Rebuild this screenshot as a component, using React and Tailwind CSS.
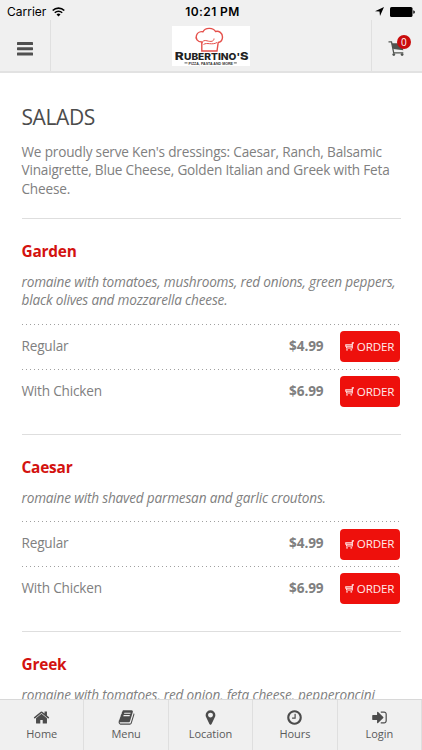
const GLYPHS = {
  home: "M1472 992v480q0 26-19 45t-45 19h-384v-384h-256v384h-384q-26 0-45-19t-19-45v-480q0-1 .5-3t.5-3l575-474 575 474q1 2 1 6zm223-69l-62 74q-8 9-21 11h-3q-13 0-21-7l-692-577-692 577q-12 8-24 7-13-2-21-11l-62-74q-8-10-7-23.5t11-21.5l719-599q32-26 76-26t76 26l244 204v-195q0-14 9-23t23-9h192q14 0 23 9t9 23v408l219 182q10 8 11 21.5t-7 23.5z",
  book: "M1703 478q40 57 18 129l-275 906q-19 64-76.5 107.5t-122.5 43.5h-923q-77 0-148.5-53.5t-99.5-131.5q-24-67-2-127 0-4 3-27t4-37q1-8-3-21.5t-3-19.5q2-11 8-21t16.5-23.5 16.5-23.5q23-38 45-91.5t30-91.5q3-10 .5-30t-.5-28q3-11 17-28t17-23q21-36 42-92t25-90q1-9-2.5-32t.5-28q4-13 22-30.5t22-22.5q19-26 42.5-84.5t27.5-96.5q1-8-3-25.5t-2-26.5q2-8 9-18t18-23 17-21q8-12 16.5-30.5t15-35 16-36 19.5-32 26.5-23.5 36-11.5 47.5 5.5l-1 3q38-9 51-9h761q74 0 114 56t18 130l-274 906q-36 119-71.5 153.5t-128.5 34.5h-869q-27 0-38 15-11 16-1 43 24 70 144 70h923q29 0 56-15.5t35-41.5l300-987q7-22 5-57 38 15 59 43zm-1064 2q-4 13 2 22.5t20 9.5h608q13 0 25.5-9.5t16.5-22.5l21-64q4-13-2-22.5t-20-9.5h-608q-13 0-25.5 9.5t-16.5 22.5zm-83 256q-4 13 2 22.5t20 9.5h608q13 0 25.5-9.5t16.5-22.5l21-64q4-13-2-22.5t-20-9.5h-608q-13 0-25.5 9.5t-16.5 22.5z",
  marker: "M1152 640q0-106-75-181t-181-75-181 75-75 181 75 181 181 75 181-75 75-181zm256 0q0 109-33 179l-364 774q-16 33-47.5 52t-67.5 19-67.5-19-46.5-52l-365-774q-33-70-33-179 0-212 150-362t362-150 362 150 150 362z",
  clock: "M1024 544v448q0 14-9 23t-23 9h-320q-14 0-23-9t-9-23v-64q0-14 9-23t23-9h224v-352q0-14 9-23t23-9h64q14 0 23 9t9 23zm416 352q0-148-73-273t-198-198-273-73-273 73-198 198-73 273 73 273 198 198 273 73 273-73 198-198 73-273zm224 0q0 209-103 385.5t-279.5 279.5-385.5 103-385.5-103-279.5-279.5-103-385.5 103-385.5 279.5-279.5 385.5-103 385.5 103 279.5 279.5 103 385.5z",
  login: "M1312 896q0 26-19 45l-544 544q-19 19-45 19t-45-19-19-45v-288h-448q-26 0-45-19t-19-45v-384q0-26 19-45t45-19h448v-288q0-26 19-45t45-19 45 19l544 544q19 19 19 45zm352-352v704q0 119-84.5 203.5t-203.5 84.5h-320q-13 0-22.5-9.5t-9.5-22.5q0-4-1-20t-.5-26.5 3-23.5 10-19.5 20.5-6.5h320q66 0 113-47t47-113v-704q0-66-47-113t-113-47h-312l-11.5-1-11.5-3-8-5.5-7-9-2-13.5q0-4-1-20t-.5-26.5 3-23.5 10-19.5 20.5-6.5h320q119 0 203.5 84.5t84.5 203.5z",
};

const sections = [
  {
    name: "Garden",
    description: "romaine with tomatoes, mushrooms, red onions, green peppers, black olives and mozzarella cheese.",
    options: [
      { label: "Regular", price: "$4.99" },
      { label: "With Chicken", price: "$6.99" },
    ],
  },
  {
    name: "Caesar",
    description: "romaine with shaved parmesan and garlic croutons.",
    options: [
      { label: "Regular", price: "$4.99" },
      { label: "With Chicken", price: "$6.99" },
    ],
  },
  {
    name: "Greek",
    description: "romaine with tomatoes, red onion, feta cheese, pepperoncini",
    options: [],
  },
];

const tabs = [
  { label: "Home", icon: "home" },
  { label: "Menu", icon: "book" },
  { label: "Location", icon: "marker" },
  { label: "Hours", icon: "clock" },
  { label: "Login", icon: "login" },
];

function StatusBar() {
  return (
    <div className="grid h-5 grid-cols-3 items-center px-[7px] font-['Inter'] text-[12px] leading-5 text-black">
      <div className="flex items-center gap-[6px] pt-[2px]">
        <span>Carrier</span>
        <svg width="13" height="10" viewBox="0 0 13 10" fill="none" stroke="black" strokeWidth="1.6">
          <path d="M0.7 3.5a8.2 8.2 0 0 1 11.6 0" />
          <path d="M2.8 5.8a5.2 5.2 0 0 1 7.4 0" />
          <path d="M6.5 9.6L4.5 7.6a2.8 2.8 0 0 1 4 0z" fill="black" stroke="none" />
        </svg>
      </div>
      <span className="pt-[2px] pl-[3px] text-center font-semibold tracking-[0.4px]">10:21 PM</span>
      <div className="flex items-center justify-end gap-[6px] pt-[1px]">
        <svg width="9" height="9" viewBox="0 0 9 9">
          <path d="M9 0L5 9L4.5 4.6L0 4.2z" />
        </svg>
        <svg width="25" height="10" viewBox="0 0 25 10">
          <rect x="0" y="0" width="22.5" height="10" rx="1.6" />
          <path d="M23.3 3.2q1.6 0.4 1.6 1.8t-1.6 1.8z" />
        </svg>
      </div>
    </div>
  );
}

function Logo() {
  return (
    <svg width="78" height="40" viewBox="0 0 78 40" className="bg-white">
      <path
        d="M29.8 25V16C25.5 16 23 12.5 24.6 9C25.5 6.5 28.5 5.3 31 5.8C33 1.5 41 1 43.5 5.5C47 4.5 50.5 7 50.5 11C50.5 14 49 16 46.2 16.5L45 25z"
        fill="#fff"
        stroke="#e5504b"
        strokeWidth="1.4"
      />
      <path d="M29.8 17.3C30.5 14.8 32.5 14 35 14.8C39 16 42 15.5 42 12.5M31.5 18.5C35 16 40 19.5 45 16.5" fill="none" stroke="#e5504b" strokeWidth="1" />
      <g className="fill-[#222] font-['Inter'] font-extrabold">
        <text x="2.8" y="34" fontSize="10.4" textLength="9" lengthAdjust="spacingAndGlyphs">R</text>
        <text x="12" y="34" fontSize="9.4" textLength="56" lengthAdjust="spacingAndGlyphs">UBERTINO&apos;</text>
        <text x="68" y="34" fontSize="10.4" textLength="8.5" lengthAdjust="spacingAndGlyphs">S</text>
      </g>
      <path d="M12.5 36.9H15.5M61.8 36.9H64.8" stroke="#333" strokeWidth="0.8" />
      <text x="16.5" y="38.6" fontSize="3.8" textLength="44.5" lengthAdjust="spacingAndGlyphs" className="fill-[#333] font-['Liberation_Sans'] font-bold">
        PIZZA, PASTA AND MORE
      </text>
    </svg>
  );
}

function Header() {
  return (
    <header className="h-[73px] shrink-0 border-b-2 border-[#e2e2e2] bg-[#f0f0f0]">
      <StatusBar />
      <div className="flex h-[51px]">
        <button className="flex w-[51px] items-center justify-center border-r border-[#e0e0e0] pt-[6px]">
          <svg width="16" height="14" viewBox="0 0 16 14" fill="#505050">
            <rect width="16" height="3" rx="0.6" />
            <rect y="5.2" width="16" height="3" rx="0.6" />
            <rect y="10.5" width="16" height="3" rx="0.6" />
          </svg>
        </button>
        <div className="flex flex-1 justify-center pt-[6px]">
          <Logo />
        </div>
        <button className="relative w-[51px] border-l border-[#e0e0e0]">
          <svg width="17" height="16" viewBox="0 0 16 16" className="absolute left-[16px] top-[21px]">
            <path d="M3 2.2H13L14.8 9.2L4.8 8z" fill="#505450" />
            <path d="M0 0.9H3L5.2 11.8M4.6 11.9H14.8" fill="none" stroke="#505450" strokeWidth="1.3" />
            <circle cx="5.3" cy="13.6" r="1.4" fill="#505450" />
            <circle cx="13.6" cy="13.6" r="1.4" fill="#505450" />
          </svg>
          <span className="absolute left-[25px] top-[15px] flex h-[13.5px] w-[13.5px] items-center justify-center rounded-full bg-[#c90c0c] text-[10px] leading-none text-white">
            0
          </span>
        </button>
      </div>
    </header>
  );
}

function OrderButton() {
  return (
    <button className="mr-px ml-4 flex h-[31px] w-[60px] items-center justify-center gap-[3px] rounded-[4px] bg-[#ee100c] text-[11.6px] tracking-[-0.15px] text-[#ffeaea]">
      <svg width="9" height="9" viewBox="0 0 9 9" fill="none" stroke="#ffeaea">
        <path d="M9 0.9H7.3V6H1.6V4.6" strokeWidth="1.1" />
        <path d="M7 2.8H0.8V4.3H7" strokeWidth="1.1" />
        <path d="M1.2 7.9H2.8M5.5 7.9H7.1" strokeWidth="1.4" />
      </svg>
      ORDER
    </button>
  );
}

function MenuItem({ item }) {
  return (
    <section className="border-t border-[#dedede] pt-[22px] pb-[20.5px]">
      <h2 className="text-[15.4px] leading-[22px] font-bold tracking-[-0.2px] text-[#d3120f]">{item.name}</h2>
      <p className="mt-[10px] mb-[14px] text-[13.6px] leading-[18.35px] tracking-[-0.18px] italic">{item.description}</p>
      {item.options.map((option) => (
        <div key={option.label} className="h-[44.8px]">
          <div className="h-px bg-[repeating-linear-gradient(90deg,#a0a0a0_0_1.5px,transparent_1.5px_4px)]" />
          <div className="flex h-[43.8px] items-center">
            <span className="flex-1 pb-[1px] text-[13.6px] tracking-[-0.19px]">{option.label}</span>
            <span className="pb-[1px] text-[13.6px] font-bold tracking-[-0.1px]">{option.price}</span>
            <OrderButton />
          </div>
        </div>
      ))}
    </section>
  );
}

function TabBar() {
  return (
    <nav className="grid h-[51px] shrink-0 grid-cols-5 border-t border-[#d8d8d8] bg-[#f0f0f0]">
      {tabs.map((tab) => (
        <button key={tab.label} className="flex flex-col items-center border-r border-[#dfdfdf] pt-[9px] text-[11px] leading-[17px] tracking-[-0.05px] text-[#5a5a5a]">
          <svg width="17" height="17" viewBox="0 0 1792 1792" fill="#4c4c4c">
            <path d={GLYPHS[tab.icon]} />
          </svg>
          <span className="-mt-px">{tab.label}</span>
        </button>
      ))}
    </nav>
  );
}

export default function App() {
  return (
    <div className="flex h-[750px] w-[422px] flex-col overflow-hidden bg-white font-['Open_Sans',sans-serif] text-[#808080]">
      <Header />
      <main className="min-h-0 flex-1 overflow-hidden px-[21.5px]">
        <h1 className="mt-[30px] text-[21px] leading-[28px] tracking-[-0.4px] text-[#4c4c4c]">SALADS</h1>
        <p className="mt-[12px] mb-[20px] text-[13.6px] leading-[18.35px] tracking-[-0.19px]">
          We proudly serve Ken&apos;s dressings: Caesar, Ranch, Balsamic Vinaigrette, Blue Cheese, Golden Italian and Greek with Feta Cheese.
        </p>
        {sections.map((item) => (
          <MenuItem key={item.name} item={item} />
        ))}
      </main>
      <TabBar />
    </div>
  );
}
